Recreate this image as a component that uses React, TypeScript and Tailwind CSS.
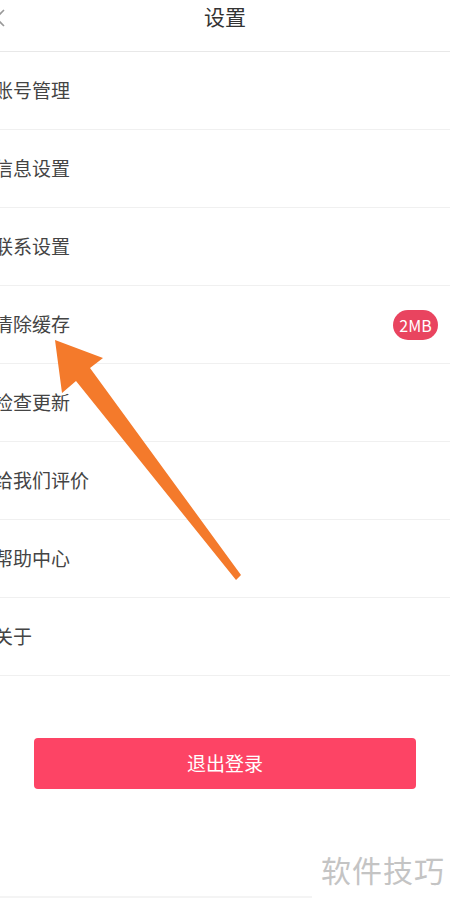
import React from "react";

const items = ["账号管理", "信息设置", "联系设置", "清除缓存", "检查更新", "给我们评价", "帮助中心", "关于"];

const App: React.FC = () => {
    return (
        <div
            className="relative w-[450px] h-[900px] overflow-hidden bg-white text-[#333]"
            style={{ fontFamily: '"Noto Sans CJK SC", "Noto Sans", sans-serif' }}
        >
            <header className="relative h-[52px] flex items-center justify-center border-b border-[#e8e8e8]">
                <svg className="absolute left-[-8px] top-[9px]" width="16" height="18" viewBox="0 0 16 18" fill="none">
                    <path d="M12 1L4 9l8 8" stroke="#999" strokeWidth="1.6" />
                </svg>
                <h1 className="text-[21px] leading-none -mt-[18px] text-[#333]">设置</h1>
            </header>

            <ul>
                {items.map((name) => (
                    <li key={name} className="h-[78px] flex items-center justify-between border-b border-[#f0f0f0] pl-0 pr-[12px]">
                        <span className="ml-[-6px] text-[19px] text-[#444]">{name}</span>
                        {name === "清除缓存" && (
                            <span className="h-[30px] w-[45px] rounded-full bg-[#e9445f] text-white text-[16px] flex items-center justify-center">
                                2MB
                            </span>
                        )}
                    </li>
                ))}
            </ul>

            <div className="pt-[62px] px-[34px]">
                <button className="w-full h-[51px] rounded-[4px] bg-[#fd4465] text-white text-[19px]">退出登录</button>
            </div>

            <div className="flex justify-end pr-[5px] pt-[58px]">
                <span className="text-[30px] text-[#c4c4c4] tracking-[1px]">软件技巧</span>
            </div>
            <div className="mt-[4px] w-[312px] h-[2px] bg-[#f4f4f4]" />

            <svg className="absolute left-0 top-0 pointer-events-none" width="450" height="900" viewBox="0 0 450 900">
                <polygon
                    points="55,340 103,358 90,368 241,575 236,580 76,381 62,393"
                    fill="#f47a2b"
                />
            </svg>
        </div>
    );
};

export default App;
